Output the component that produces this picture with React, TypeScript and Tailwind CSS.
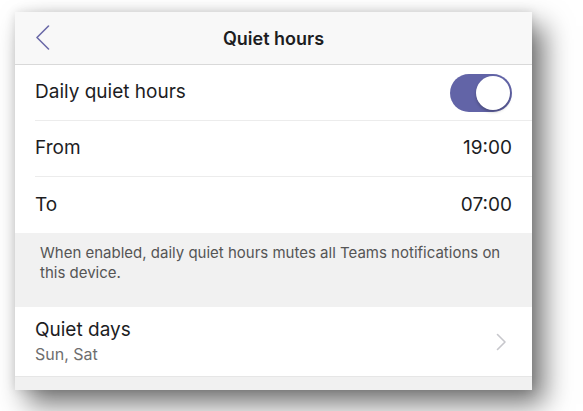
const font = { fontFamily: "Inter, 'Noto Sans', sans-serif" };

function Row({ label, value, last }: { label: string; value?: React.ReactNode; last?: boolean }) {
  return (
    <div className="flex h-[56px] items-center pl-5">
      <div className={`flex h-full flex-1 items-center pr-5 ${last ? "" : "border-b border-[#ececec]"}`}>
        <span className="flex-1 text-[19px] text-[#1d1d1f]">{label}</span>
        {value}
      </div>
    </div>
  );
}

export default function App() {
  return (
    <div className="h-[411px] w-[583px] bg-white pl-[15px] pt-[12px]" style={font}>
      <div className="flex h-[378px] w-[517px] flex-col overflow-hidden bg-[#f1f1f1] shadow-[0_0_10px_rgba(0,0,0,0.12),12px_14px_26px_rgba(0,0,0,0.55)]">
        {/* Header */}
        <div className="relative flex h-[53px] items-center justify-center border-b border-[#d9d9d9] bg-[#f8f8f8]">
          <svg className="absolute left-[20px] top-[13px]" width="15" height="25" viewBox="0 0 15 25" fill="none">
            <path d="M13.5 1 L2 12.5 L13.5 24" stroke="#6b6aa8" strokeWidth="1.6" strokeLinecap="round" strokeLinejoin="round" />
          </svg>
          <span className="text-[18px] font-semibold text-[#1d1d1f]">Quiet hours</span>
        </div>

        {/* Settings group */}
        <div className="bg-white">
          <Row
            label="Daily quiet hours"
            value={
              <div className="flex h-[38px] w-[62px] items-center justify-end rounded-full bg-[#6264a7] p-[2px]">
                <div className="h-[34px] w-[34px] rounded-full bg-white shadow-[0_2px_3px_rgba(0,0,0,0.25)]" />
              </div>
            }
          />
          <Row label="From" value={<span className="text-[19px] text-[#1d1d1f]">19:00</span>} />
          <Row label="To" value={<span className="text-[19px] text-[#1d1d1f]">07:00</span>} last />
        </div>

        {/* Footnote */}
        <div className="h-[74px] px-[25px] pt-[10px] text-[15px] leading-[20px] text-[#555555]">
          When enabled, daily quiet hours mutes all Teams notifications on this device.
        </div>

        {/* Quiet days */}
        <div className="flex h-[70px] items-center border-b border-[#e6e6e6] bg-white pl-5 pr-5">
          <div className="flex flex-1 flex-col">
            <span className="text-[19px] leading-[24px] text-[#1d1d1f]">Quiet days</span>
            <span className="text-[16px] leading-[24px] text-[#6e6e6e]">Sun, Sat</span>
          </div>
          <svg width="11" height="18" viewBox="0 0 11 18" fill="none" className="mr-[5px]">
            <path d="M1.5 1.5 L9 9 L1.5 16.5" stroke="#c7c7cc" strokeWidth="1.6" strokeLinecap="round" strokeLinejoin="round" />
          </svg>
        </div>
      </div>
    </div>
  );
}
